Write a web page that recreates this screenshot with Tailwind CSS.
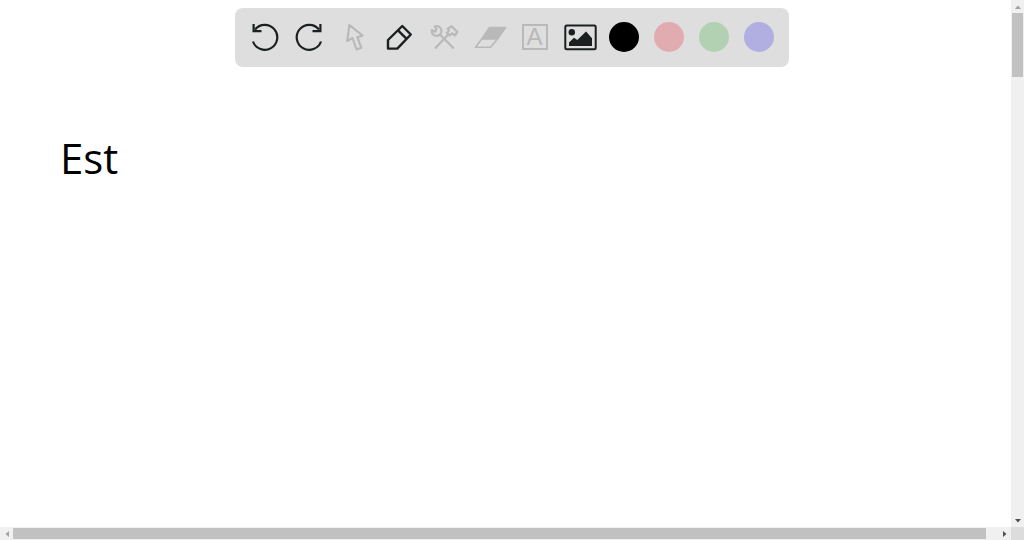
<!DOCTYPE html>
<html lang="en">
<head>
    <meta charset="UTF-8" />
    <meta name="viewport" content="width=device-width, initial-scale=1.0" />
    <title>Whiteboard</title>
    <script src="https://cdn.jsdelivr.net/npm/@tailwindcss/browser@4"></script>
</head>
<body class="relative h-screen overflow-hidden bg-white font-['Liberation_Sans',sans-serif]">

<!-- Board with its scrollbars -->
<div class="grid h-full grid-cols-[1fr_13px] grid-rows-[1fr_13px]">
    <main class="overflow-hidden px-15 pt-32">
        <p class="font-['Open_Sans',sans-serif] text-[42px] leading-[60px] font-medium text-black">Est</p>
    </main>

    <div class="flex flex-col items-center bg-[#f0f0f0]">
        <button type="button" aria-label="Scroll up" class="flex h-[13px] w-full items-center justify-center">
            <svg class="h-1 w-2" viewBox="0 0 8 4" fill="#a3a3a3"><path d="M1 4 4 0.5 7 4Z" /></svg>
        </button>
        <div class="w-[11px] flex-1">
            <div class="h-16 bg-[#c1c1c1]"></div>
        </div>
        <button type="button" aria-label="Scroll down" class="flex h-[13px] w-full items-center justify-center">
            <svg class="h-1 w-2" viewBox="0 0 8 4" fill="#505050"><path d="M1 0 4 3.5 7 0Z" /></svg>
        </button>
    </div>

    <div class="flex items-center bg-[#f0f0f0]">
        <button type="button" aria-label="Scroll left" class="flex h-full w-[13px] items-center justify-center">
            <svg class="h-2 w-1" viewBox="0 0 4 8" fill="#a3a3a3"><path d="M4 1 0.5 4 4 7Z" /></svg>
        </button>
        <div class="mr-3 h-[11px] flex-1 bg-[#c1c1c1]"></div>
        <button type="button" aria-label="Scroll right" class="flex h-full w-[13px] items-center justify-center">
            <svg class="h-2 w-1" viewBox="0 0 4 8" fill="#505050"><path d="M0 1 3.5 4 0 7Z" /></svg>
        </button>
    </div>

    <div class="bg-[#dcdcdc]"></div>
</div>

<!-- Floating toolbar -->
<header class="absolute inset-x-0 top-2 flex justify-center">
    <div role="toolbar" aria-label="Drawing tools" class="flex rounded-lg bg-[#dedede] p-[7px] text-[#1b1f20]">
        <button type="button" aria-label="Undo" class="size-[45px]">
            <svg viewBox="0 0 45 45" fill="none" stroke="currentColor" stroke-width="2.2">
                <path d="M11.6 9v7.2h7.9" />
                <path d="M11 26.5A12.5 12.5 0 1 0 13 14.5" />
            </svg>
        </button>
        <button type="button" aria-label="Redo" class="size-[45px]">
            <svg viewBox="0 0 45 45" fill="none" stroke="currentColor" stroke-width="2.2">
                <path d="M33.4 9v7.2h-7.9" />
                <path d="M34 26.5A12.5 12.5 0 1 1 32 14.5" />
            </svg>
        </button>
        <button type="button" aria-label="Select" class="size-[45px] text-[#b9b9b9]">
            <svg viewBox="0 0 45 45" fill="none" stroke="currentColor" stroke-width="2.2" stroke-linejoin="round">
                <path d="M17.4 10 15.2 26l5.3-3 4 11.5 4.8-1.8-4-10.5 5.3-1.6Z" />
            </svg>
        </button>
        <button type="button" aria-label="Pen" class="size-[45px]">
            <svg viewBox="0 0 45 45" fill="none" stroke="currentColor" stroke-width="2.4" stroke-linejoin="round">
                <path d="M25.3 11 33.8 19.5 20.3 33.6H11V25Z" />
                <path d="m21 15.3 8.6 8.6" />
            </svg>
        </button>
        <button type="button" aria-label="Tools" class="size-[45px] text-[#b9b9b9]">
            <svg viewBox="0 0 45 45" fill="none" stroke="currentColor" stroke-width="2.2" stroke-linejoin="round">
                <path d="M12.8 11.4A4.9 4.9 0 1 1 9.8 15.2l3.6 1.4 1-2.8Z" />
                <path d="m18 19.6 13.8 14M13 33.6l14-14.8" />
                <path d="m24.7 18 2.3-2.3-1.3-2 4-2.4 5.6 5.7-2.3 3.3-2.7-2-2.6 2Z" />
            </svg>
        </button>
        <button type="button" aria-label="Eraser" class="size-[45px] text-[#b9b9b9]">
            <svg viewBox="0 0 45 45" fill="none" stroke="currentColor" stroke-width="1.6" stroke-linejoin="round">
                <path d="M22.5 12.5H38.5L30.5 24H14.8Z" fill="currentColor" />
                <path d="M14.8 24 8.5 32.3H23.5L30.5 24" />
            </svg>
        </button>
        <button type="button" aria-label="Text" class="flex size-[45px] items-center justify-center pb-px text-[#b9b9b9]">
            <span class="flex size-[26px] items-center justify-center border-2 border-current text-2xl leading-none">A</span>
        </button>
        <button type="button" aria-label="Image" class="size-[45px]">
            <svg viewBox="0 0 45 45" fill="none" stroke="currentColor" stroke-width="2">
                <rect x="8.3" y="10.4" width="30.4" height="23.8" rx="1.5" />
                <circle cx="14.8" cy="17.2" r="3.2" fill="currentColor" stroke="none" />
                <path d="M12 31v-3.5l5-4.8 3.3 2.3 8.7-8.5 6 6.8V31Z" fill="currentColor" stroke="none" />
            </svg>
        </button>
        <button type="button" aria-label="Black" class="flex size-[45px] items-center justify-center pr-px pb-px">
            <span class="size-[30px] rounded-full bg-black"></span>
        </button>
        <button type="button" aria-label="Red" class="flex size-[45px] items-center justify-center pr-px pb-px">
            <span class="size-[30px] rounded-full bg-[#e0acb0]"></span>
        </button>
        <button type="button" aria-label="Green" class="flex size-[45px] items-center justify-center pr-px pb-px">
            <span class="size-[30px] rounded-full bg-[#b1d1b2]"></span>
        </button>
        <button type="button" aria-label="Blue" class="flex size-[45px] items-center justify-center pr-px pb-px">
            <span class="size-[30px] rounded-full bg-[#b1aee1]"></span>
        </button>
    </div>
</header>

</body>
</html>
